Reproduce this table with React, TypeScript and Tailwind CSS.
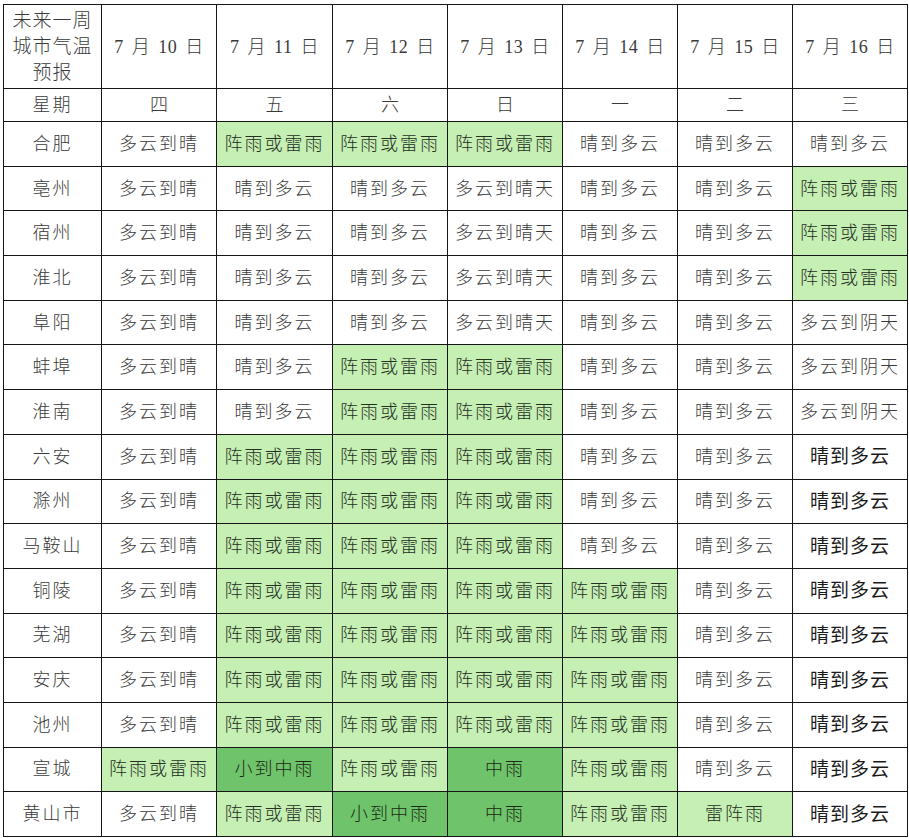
type Tone = "w" | "l" | "d" | "s";

type Cell = { text: string; tone: Tone };

const dates = ["7 月 10 日", "7 月 11 日", "7 月 12 日", "7 月 13 日", "7 月 14 日", "7 月 15 日", "7 月 16 日"];
const weekdays = ["四", "五", "六", "日", "一", "二", "三"];

const A = "多云到晴";
const B = "晴到多云";
const C = "多云到晴天";
const Y = "多云到阴天";
const R = "阵雨或雷雨";

const w = (text: string): Cell => ({ text, tone: "w" });
const l = (text: string): Cell => ({ text, tone: "l" });
const d = (text: string): Cell => ({ text, tone: "d" });
const s = (text: string): Cell => ({ text, tone: "s" });

const rows: { city: string; cells: Cell[] }[] = [
  { city: "合肥", cells: [w(A), l(R), l(R), l(R), w(B), w(B), w(B)] },
  { city: "亳州", cells: [w(A), w(B), w(B), w(C), w(B), w(B), l(R)] },
  { city: "宿州", cells: [w(A), w(B), w(B), w(C), w(B), w(B), l(R)] },
  { city: "淮北", cells: [w(A), w(B), w(B), w(C), w(B), w(B), l(R)] },
  { city: "阜阳", cells: [w(A), w(B), w(B), w(C), w(B), w(B), w(Y)] },
  { city: "蚌埠", cells: [w(A), w(B), l(R), l(R), w(B), w(B), w(Y)] },
  { city: "淮南", cells: [w(A), w(B), l(R), l(R), w(B), w(B), w(Y)] },
  { city: "六安", cells: [w(A), l(R), l(R), l(R), w(B), w(B), s(B)] },
  { city: "滁州", cells: [w(A), l(R), l(R), l(R), w(B), w(B), s(B)] },
  { city: "马鞍山", cells: [w(A), l(R), l(R), l(R), w(B), w(B), s(B)] },
  { city: "铜陵", cells: [w(A), l(R), l(R), l(R), l(R), w(B), s(B)] },
  { city: "芜湖", cells: [w(A), l(R), l(R), l(R), l(R), w(B), s(B)] },
  { city: "安庆", cells: [w(A), l(R), l(R), l(R), l(R), w(B), s(B)] },
  { city: "池州", cells: [w(A), l(R), l(R), l(R), l(R), w(B), s(B)] },
  { city: "宣城", cells: [l(R), d("小到中雨"), l(R), d("中雨"), l(R), w(B), s(B)] },
  { city: "黄山市", cells: [w(A), l(R), d("小到中雨"), d("中雨"), l(R), l("雷阵雨"), s(B)] },
];

const toneClass: Record<Tone, string> = {
  w: "bg-white text-[#3a3a3a] font-light tracking-[2px] text-[18px]",
  l: "bg-[#c6efb4] text-[#24301f] font-light tracking-[2px] text-[18px]",
  d: "bg-[#6fc46b] text-[#1a2a14] font-light tracking-[2px] text-[18px]",
  s: "bg-white text-[#1a1a1a] text-[19px] tracking-[1px]",
};

const cellBase = "border border-[#151515] text-center align-middle p-0 leading-none whitespace-nowrap";

export default function App() {
  return (
    <div
      className="bg-white w-[909px] h-[838px] pt-[4px] pl-[3px]"
      style={{ fontFamily: '"Liberation Serif", "Noto Sans CJK SC", serif' }}
    >
      <table className="border-collapse table-fixed w-[904px]">
        <colgroup>
          <col className="w-[98px]" />
          <col className="w-[115px]" />
          <col className="w-[116px]" />
          <col className="w-[115px]" />
          <col className="w-[115px]" />
          <col className="w-[115px]" />
          <col className="w-[115px]" />
          <col className="w-[115px]" />
        </colgroup>
        <tbody>
          <tr className="h-[84px]">
            <td className="border border-[#151515] text-center align-middle px-[6px] text-[19px] leading-[26px] font-light text-[#3a3a3a] tracking-[1px]">
              未来一周城市气温预报
            </td>
            {dates.map((date) => (
              <td
                key={date}
                className={`${cellBase} text-[18px] font-light text-[#3a3a3a] tracking-[0.5px] [word-spacing:3px]`}
              >
                {date}
              </td>
            ))}
          </tr>
          <tr className="h-[33px]">
            <td className={`${cellBase} text-[18px] font-light text-[#3a3a3a] tracking-[2px]`}>星期</td>
            {weekdays.map((day) => (
              <td key={day} className={`${cellBase} text-[18px] font-light text-[#3a3a3a]`}>
                {day}
              </td>
            ))}
          </tr>
          {rows.map((row) => (
            <tr key={row.city} className="h-[44.7px]">
              <td className={`${cellBase} text-[18px] font-light text-[#3a3a3a] tracking-[2px]`}>{row.city}</td>
              {row.cells.map((cell, i) => (
                <td key={i} className={`${cellBase} ${toneClass[cell.tone]}`}>
                  {cell.text}
                </td>
              ))}
            </tr>
          ))}
        </tbody>
      </table>
    </div>
  );
}
